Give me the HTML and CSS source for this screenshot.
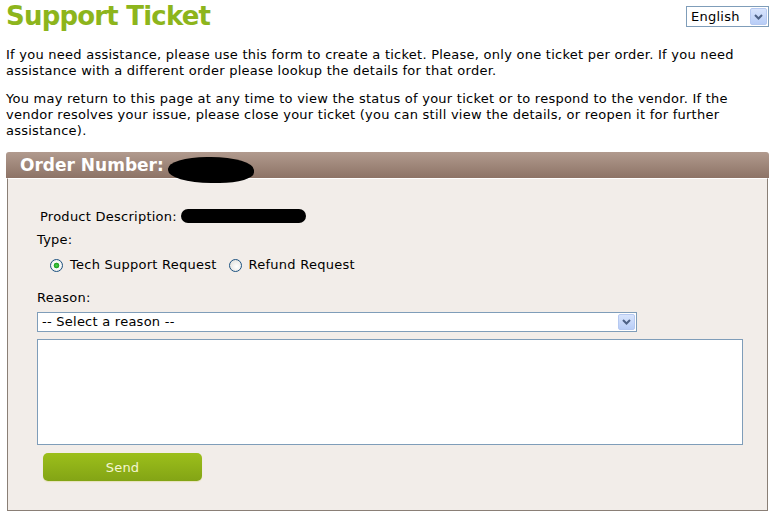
FILE: index.html
```html
<!DOCTYPE html>
<html lang="en">
<head>
    <meta charset="UTF-8">
    <title>Support Ticket</title>
    <link rel="stylesheet" href="styles.css">
</head>
<body>
    <header class="page-head">
        <h1>Support Ticket</h1>
        <div class="lang">
            <span class="lang-value">English</span>
            <span class="drop-btn">
                <svg width="9" height="6" viewBox="0 0 9 6"><path d="M1 1 L4.5 4.5 L8 1" fill="none" stroke="#4d6185" stroke-width="2"/></svg>
            </span>
        </div>
    </header>

    <p class="intro">If you need assistance, please use this form to create a ticket. Please, only one ticket per order. If you need assistance with a different order please lookup the details for that order.</p>
    <p class="intro">You may return to this page at any time to view the status of your ticket or to respond to the vendor. If the vendor resolves your issue, please close your ticket (you can still view the details, or reopen it for further assistance).</p>

    <!-- Ticket form -->
    <div class="ticket">
        <div class="ticket-bar">
            <h2>Order Number:</h2>
            <span class="redact redact-order"></span>
        </div>
        <form class="ticket-body">
            <div class="row product">Product Description: <span class="redact redact-product"></span></div>
            <div class="row">Type:</div>
            <div class="radios">
                <label><input type="radio" name="type" checked> Tech Support Request</label>
                <label><input type="radio" name="type"> Refund Request</label>
            </div>
            <div class="row reason-label">Reason:</div>
            <div class="select">
                <span class="select-value">-- Select a reason --</span>
                <span class="drop-btn">
                    <svg width="9" height="6" viewBox="0 0 9 6"><path d="M1 1 L4.5 4.5 L8 1" fill="none" stroke="#4d6185" stroke-width="2"/></svg>
                </span>
            </div>
            <textarea class="message"></textarea>
            <button type="button" class="send">Send</button>
        </form>
    </div>
</body>
</html>
```

FILE: styles.css
```css
/* Global Styles */
* {
    margin: 0;
    padding: 0;
    box-sizing: border-box;
}

body {
    font-family: 'DejaVu Sans', Verdana, sans-serif;
    font-size: 13px;
    line-height: 16px;
    letter-spacing: 0.25px;
    color: #000;
    background-color: #fff;
    padding: 0 12px 0 6px;
}

/* Header */
.page-head {
    display: flex;
    justify-content: space-between;
    align-items: flex-start;
    height: 47px;
}

.page-head h1 {
    font-size: 26px;
    line-height: 32px;
    letter-spacing: -0.8px;
    color: #8db51c;
    font-weight: bold;
}

.lang {
    display: flex;
    align-items: center;
    width: 83px;
    height: 21px;
    margin-top: 6px;
    border: 1px solid #7f9db9;
    background-color: #fff;
    padding: 1px;
}

.lang-value {
    flex: 1;
    padding-left: 3px;
}

.drop-btn {
    display: flex;
    align-items: center;
    justify-content: center;
    width: 17px;
    height: 100%;
    border: 1px solid #b6c9f1;
    border-radius: 2px;
    background: linear-gradient(#d8e4fc, #b8cdf7);
}

.intro {
    margin-bottom: 12px;
}

/* Ticket */
.ticket {
    margin-top: 13px;
}

.ticket-bar {
    display: flex;
    align-items: flex-start;
    height: 26px;
    padding-left: 14px;
    border-radius: 3px 3px 0 0;
    background: linear-gradient(#b19a8e, #8d7366);
}

.ticket-bar h2 {
    font-size: 17px;
    line-height: 26px;
    letter-spacing: 0;
    color: #fff;
    font-weight: bold;
}

.redact {
    display: inline-block;
    background-color: #000;
}

.redact-order {
    width: 86px;
    height: 26px;
    margin-top: 5px;
    margin-left: 4px;
    border-radius: 45% 50% 40% 50%;
}

.redact-product {
    width: 125px;
    height: 14px;
    vertical-align: -2px;
    border-radius: 7px;
}

.ticket-body {
    display: flex;
    flex-direction: column;
    align-items: flex-start;
    margin: 0 1px;
    padding: 30px 25px 29px 29px;
    background-color: #f2ede9;
    border: 1px solid #8a7f76;
    border-top-color: #fff;
}

.product {
    margin-left: 3px;
    margin-bottom: 7px;
}

.radios {
    display: flex;
    gap: 12px;
    margin: 9px 0 0 13px;
}

.radios label {
    display: flex;
    align-items: center;
    gap: 7px;
}

.radios input {
    appearance: none;
    width: 13px;
    height: 13px;
    border: 1px solid #1c5180;
    border-radius: 50%;
    background: radial-gradient(circle at 60% 60%, #fff, #dcdcd6);
}

.radios input:checked {
    background: radial-gradient(circle, #4ed24e 0, #21a121 2.5px, #fff 3.2px, #dcdcd6 100%);
}

.reason-label {
    margin-top: 17px;
    margin-bottom: 6px;
}

.select {
    display: flex;
    align-items: center;
    width: 600px;
    height: 20px;
    border: 1px solid #7f9db9;
    background-color: #fff;
    padding: 1px;
}

.select-value {
    flex: 1;
    padding-left: 3px;
}

.message {
    width: 706px;
    height: 106px;
    margin-top: 7px;
    border: 1px solid #7f9db9;
    background-color: #fff;
    resize: none;
}

.send {
    width: 159px;
    height: 28px;
    margin: 8px 0 0 6px;
    border: none;
    border-radius: 5px;
    background: linear-gradient(#9cbf1b, #83a415);
    box-shadow: 0 1px 1px #e6e0b8;
    color: #f4f6d2;
    font-family: 'DejaVu Sans', Verdana, sans-serif;
    font-size: 13px;
    letter-spacing: 0.25px;
}
```
